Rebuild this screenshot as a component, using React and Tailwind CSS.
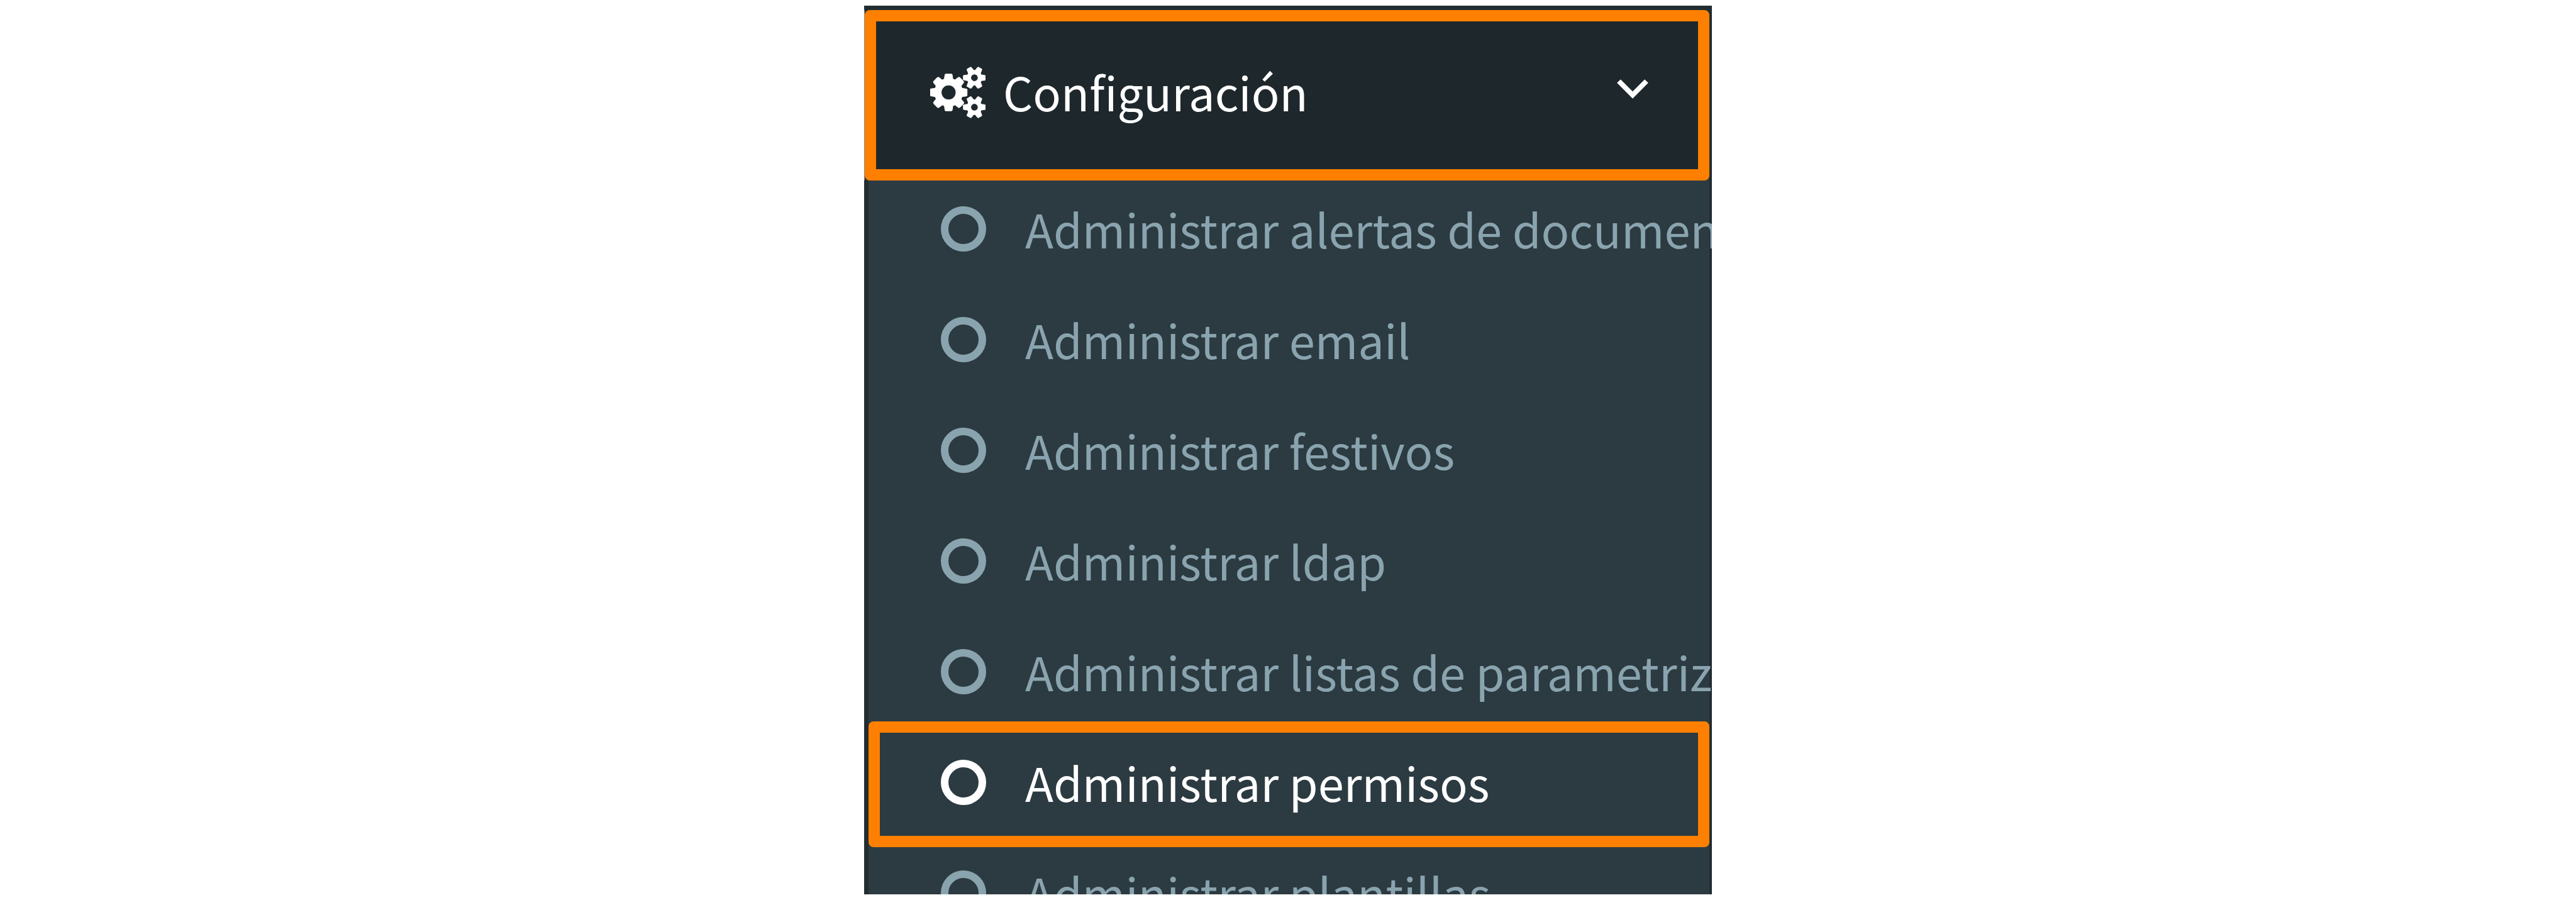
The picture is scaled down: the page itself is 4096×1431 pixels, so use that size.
const ITEMS = [
  { label: "Administrar alertas de documentos" },
  { label: "Administrar email" },
  { label: "Administrar festivos" },
  { label: "Administrar ldap" },
  { label: "Administrar listas de parametrización" },
  { label: "Administrar permisos", active: true },
  { label: "Administrar plantillas" },
];

function CogsIcon() {
  return (
    <svg
      viewBox="0 0 1920 1792"
      preserveAspectRatio="none"
      fill="currentColor"
      stroke="currentColor"
      strokeWidth="24"
      aria-hidden="true"
      className="h-[82px] w-[88px] shrink-0"
    >
      <path d="M896 896q0-106-75-181t-181-75-181 75-75 181 75 181 181 75 181-75 75-181zm768 512q0-52-38-90t-90-38-90 38-38 90q0 53 37.5 90.5t90.5 37.5 90.5-37.5 37.5-90.5zm0-1024q0-52-38-90t-90-38-90 38-38 90q0 53 37.5 90.5t90.5 37.5 90.5-37.5 37.5-90.5zm-384 421v185q0 10-7 19.5t-16 10.5l-155 24q-11 35-32 76 34 48 90 115 7 11 7 20 0 12-7 19-23 30-82.5 89.5t-78.5 59.5q-11 0-21-7l-115-90q-37 19-77 31-11 108-23 155-7 24-30 24h-186q-11 0-20-7.5t-10-17.5l-23-153q-34-10-75-31l-118 89q-7 7-20 7-11 0-21-8-144-133-144-160 0-9 7-19 10-14 41-53t47-61q-23-44-35-82l-152-24q-10-1-17-9.5t-7-19.5v-185q0-10 7-19.5t16-10.5l155-24q11-35 32-76-34-48-90-115-7-11-7-20 0-12 7-20 22-30 82-89t79-59q11 0 21 7l115 90q34-18 77-32 11-108 23-154 7-24 30-24h186q11 0 20 7.5t10 17.5l23 153q34 10 75 31l118-89q8-7 20-7 11 0 21 8 144 133 144 160 0 8-7 19-12 16-42 54t-45 60q23 48 34 82l152 23q10 2 17 10.5t7 19.5zm640 533v140q0 16-149 31-12 27-30 52 51 113 51 138 0 4-4 7-122 71-124 71-8 0-46-47t-52-68q-20 2-30 2t-30-2q-14 21-52 68t-46 47q-2 0-124-71-4-3-4-7 0-25 51-138-18-25-30-52-149-15-149-31v-140q0-16 149-31 13-29 30-52-51-113-51-138 0-4 4-7 4-2 35-20t59-34 30-16q8 0 46 46.5t52 67.5q20-2 30-2t30 2q51-71 92-112l6-2q4 0 124 70 4 3 4 7 0 25-51 138 17 23 30 52 149 15 149 31zm0-1024v140q0 16-149 31-12 27-30 52 51 113 51 138 0 4-4 7-122 71-124 71-8 0-46-47t-52-68q-20 2-30 2t-30-2q-14 21-52 68t-46 47q-2 0-124-71-4-3-4-7 0-25 51-138-18-25-30-52-149-15-149-31v-140q0-16 149-31 13-29 30-52-51-113-51-138 0-4 4-7 4-2 35-20t59-34 30-16q8 0 46 46.5t52 67.5q20-2 30-2t30 2q51-71 92-112l6-2q4 0 124 70 4 3 4 7 0 25-51 138 17 23 30 52 149 15 149 31z" />
    </svg>
  );
}

function AngleDownIcon() {
  return (
    <svg viewBox="0 0 52 32" fill="none" aria-hidden="true" className="mb-3 h-8 w-[52px] shrink-0">
      <path d="M4 4 26 26 48 4" stroke="currentColor" strokeWidth="8" />
    </svg>
  );
}

function MenuItem({ label, active }) {
  return (
    <li className="relative h-44">
      <a
        href="#"
        aria-current={active ? "page" : undefined}
        className={`flex h-full items-center gap-[62px] pl-[115px] whitespace-nowrap ${
          active ? "text-white" : "text-[#8aa4af]"
        }`}
      >
        <span className="size-[72px] shrink-0 rounded-full border-12 border-current" />
        <span className="pb-[3px]">{label}</span>
      </a>
      {/* Highlight frame */}
      {active && (
        <span className="pointer-events-none absolute inset-x-0 -top-[9px] -bottom-[15px] rounded-lg border-18 border-[#ff8000]" />
      )}
    </li>
  );
}

export default function App() {
  return (
    <div className="flex h-screen justify-center bg-white py-[9px]">
      <nav
        aria-label="Menú"
        className="flex w-full max-w-[1348px] flex-col overflow-hidden bg-[#222d32] pt-[7px] pr-1 font-['Noto_Sans_CJK_SC',sans-serif] text-[74px] leading-[110px]"
      >
        {/* Section header */}
        <div className="relative z-10 flex shrink-0 border-l border-[#8f8a78]">
          <button
            type="button"
            aria-expanded="true"
            className="flex h-[271px] flex-1 items-center gap-7 rounded-lg border-18 border-[#ff8000] bg-[#1e282c] pr-[78px] pb-[10px] pl-[86px] text-left text-white"
          >
            <CogsIcon />
            <span className="flex-1 pb-[3px]">Configuración</span>
            <AngleDownIcon />
          </button>
        </div>

        {/* Submenu, tucked under the header frame */}
        <ul className="-mt-[11px] ml-[7px] min-h-0 flex-1 bg-[#2c3b41]">
          {ITEMS.map((item) => (
            <MenuItem key={item.label} {...item} />
          ))}
        </ul>
      </nav>
    </div>
  );
}
